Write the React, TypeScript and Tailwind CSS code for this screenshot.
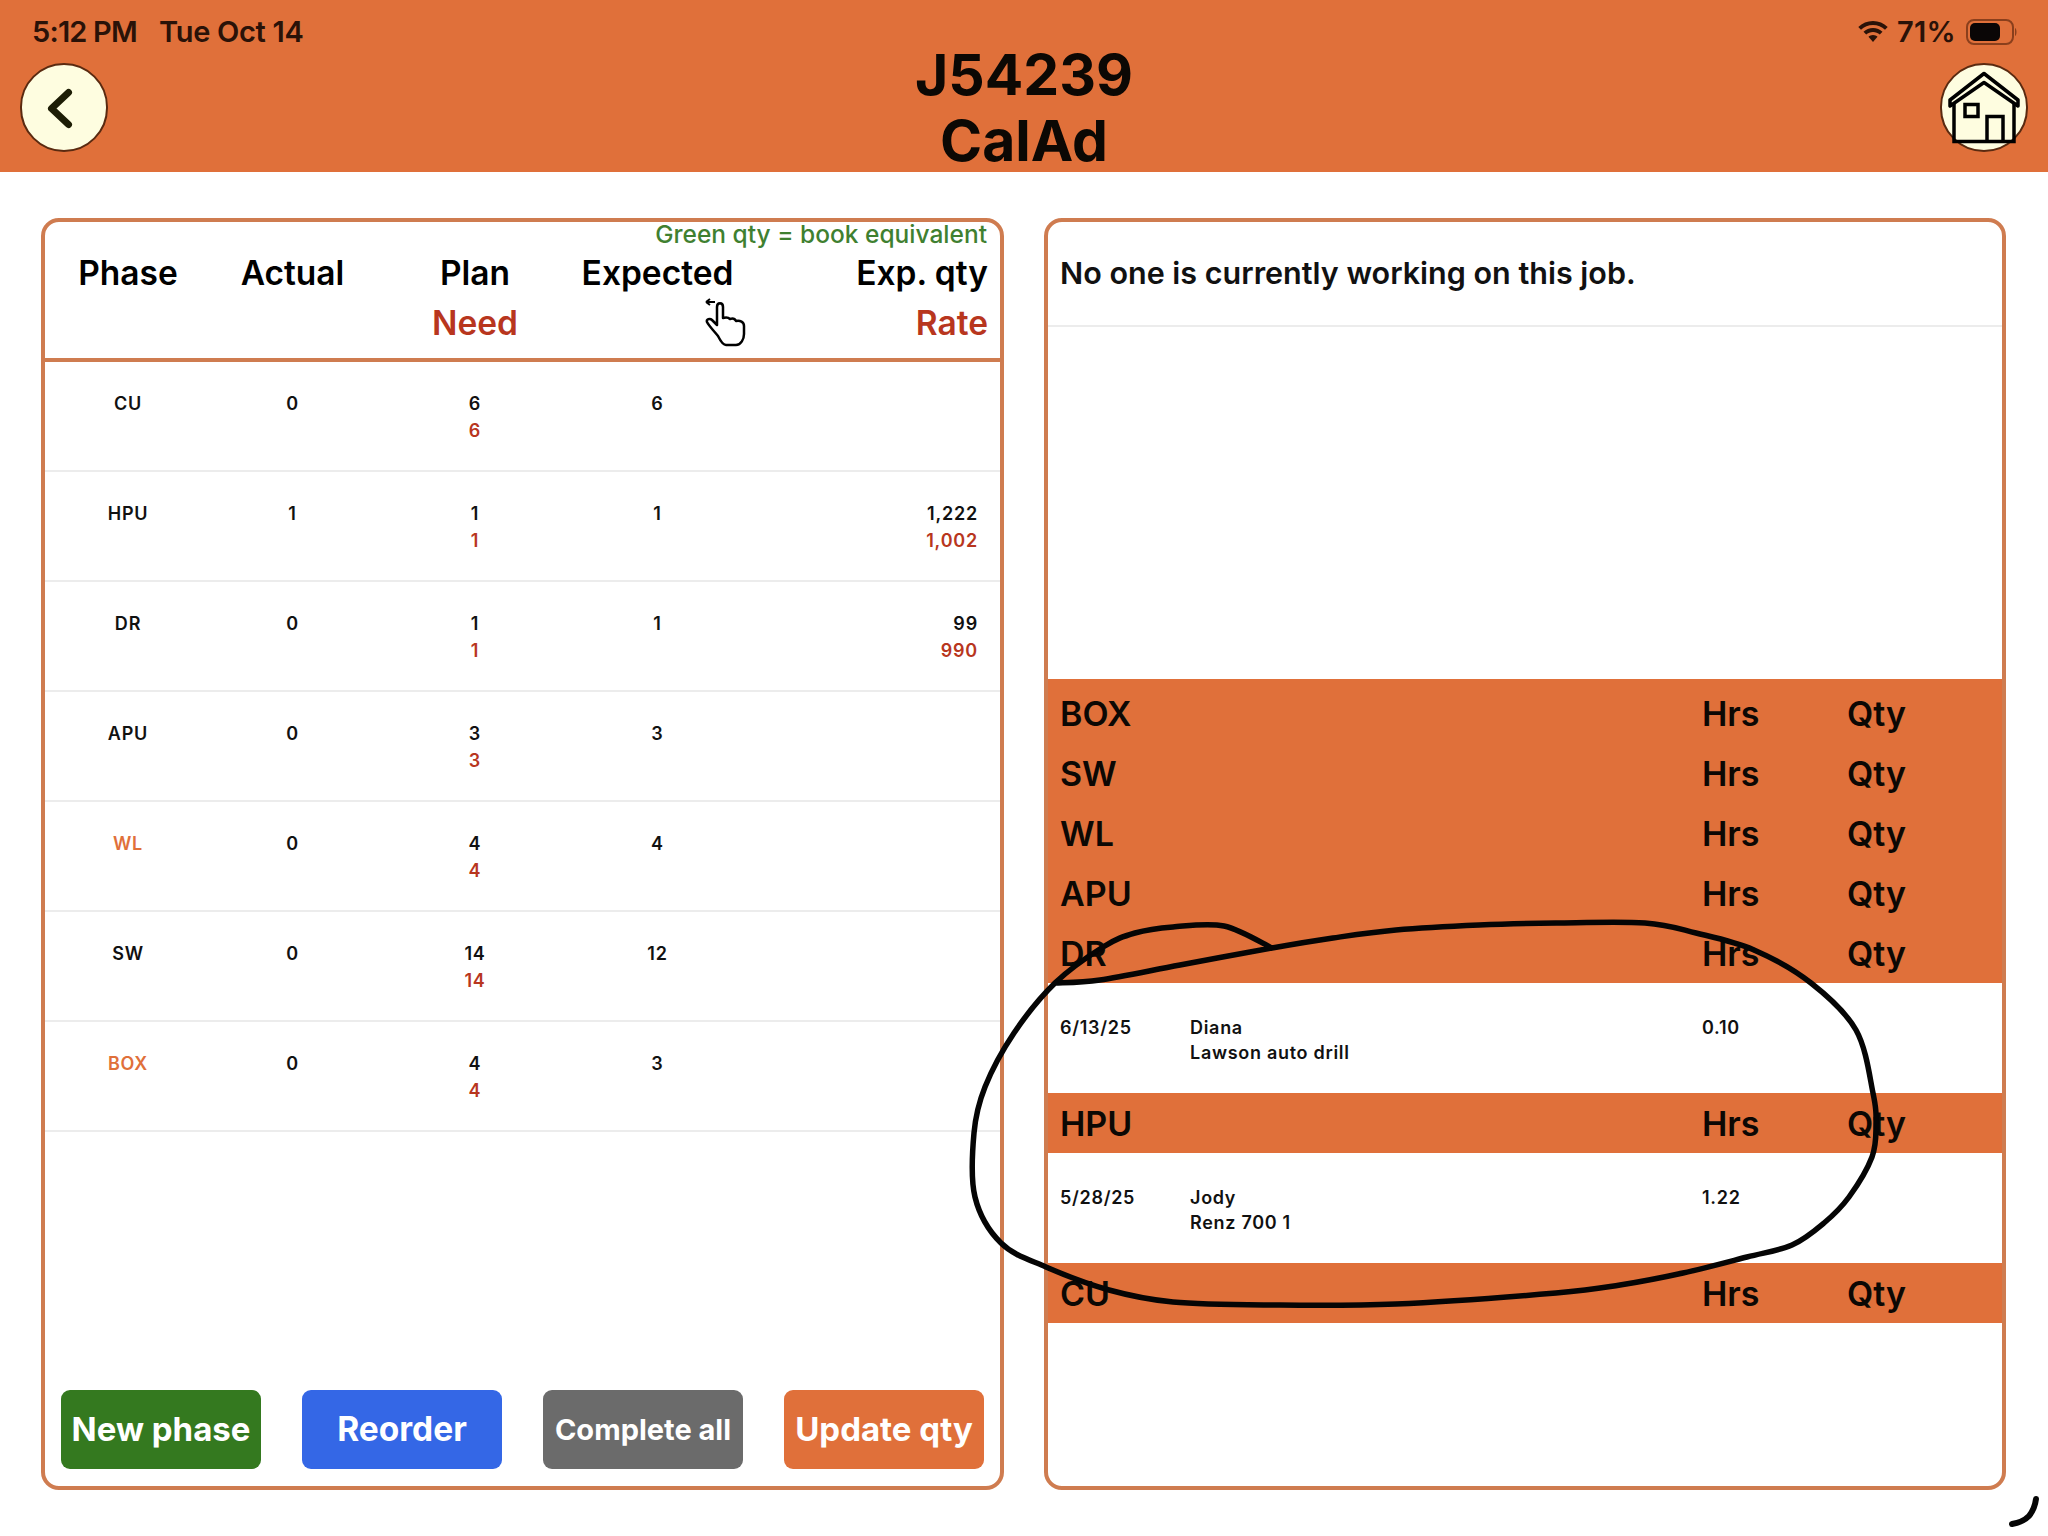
import React from "react";

const rows = [
  { p: "CU", a: "0", plan: "6", need: "6", e: "6" },
  { p: "HPU", a: "1", plan: "1", need: "1", e: "1", q: "1,222", r: "1,002" },
  { p: "DR", a: "0", plan: "1", need: "1", e: "1", q: "99", r: "990" },
  { p: "APU", a: "0", plan: "3", need: "3", e: "3" },
  { p: "WL", a: "0", plan: "4", need: "4", e: "4", o: true },
  { p: "SW", a: "0", plan: "14", need: "14", e: "12" },
  { p: "BOX", a: "0", plan: "4", need: "4", e: "3", o: true },
];

const loop: [number, number][] = [
  [1272, 948], [1224, 926], [1173, 927], [1135, 933], [1103, 947], [1055, 983], [1014, 1033], [985, 1087],
  [974, 1133], [975, 1197], [1001, 1243], [1046, 1267], [1109, 1290], [1173, 1302], [1269, 1305], [1396, 1304],
  [1556, 1293], [1620, 1285], [1683, 1273], [1747, 1257], [1792, 1245], [1824, 1223], [1849, 1197], [1872, 1157], [1876, 1125], [1873, 1093], [1856, 1030], [1811, 983],
  [1754, 950], [1696, 933], [1645, 923], [1556, 923], [1479, 925], [1396, 930], [1333, 938], [1272, 948],
  [1180, 965], [1100, 980], [1055, 983],
];

function smooth(p: [number, number][]) {
  let d = `M${p[0][0]} ${p[0][1]}`;
  for (let i = 0; i < p.length - 1; i++) {
    const a = p[Math.max(i - 1, 0)];
    const b = p[i];
    const c = p[i + 1];
    const e = p[Math.min(i + 2, p.length - 1)];
    d += `C${b[0] + (c[0] - a[0]) / 6} ${b[1] + (c[1] - a[1]) / 6} ${c[0] - (e[0] - b[0]) / 6} ${c[1] - (e[1] - b[1]) / 6} ${c[0]} ${c[1]}`;
  }
  return d;
}

function Band({ name }: { name: string }) {
  return (
    <div className="flex h-[60px] items-center bg-[#e0703a] text-[34px] font-semibold text-[#0c0804]">
      <div className="w-[654px] pl-[12px]">{name}</div>
      <div className="w-[145px]">Hrs</div>
      <div>Qty</div>
    </div>
  );
}

function Detail({ d, n, j, h }: { d: string; n: string; j: string; h: string }) {
  return (
    <div className="flex h-[110px] pt-[32px] text-[18px] leading-[25px] font-semibold tracking-[0.7px] text-[#111]">
      <div className="w-[142px] pl-[12px]">{d}</div>
      <div className="w-[512px]">
        <div>{n}</div>
        <div>{j}</div>
      </div>
      <div>{h}</div>
    </div>
  );
}

function Button({ label, cls, size }: { label: string; cls: string; size: string }) {
  return (
    <div className={`flex h-[79px] w-[200px] items-center justify-center rounded-[9px] font-bold whitespace-nowrap text-white ${cls} ${size}`}>
      {label}
    </div>
  );
}

function Circle({ children }: { children: React.ReactNode }) {
  return (
    <div className="mb-[3px] flex h-[89px] w-[88px] items-center justify-center rounded-full border-2 border-[#5a2a10] bg-[#fefde0]">
      {children}
    </div>
  );
}

export default function App() {
  return (
    <div className="relative h-[1536px] w-[2048px] overflow-hidden bg-white font-['Inter','Liberation_Sans',sans-serif]">
      <header className="h-[172px] bg-[#e0703a] text-[#0c0804]">
        <div className="flex h-[63px] items-center justify-between pt-[1px] pr-[30px] pl-[32px] text-[29px] font-semibold text-[#2a1208]">
          <div className="flex gap-[22px]">
            <span className="tracking-[-0.8px]">5:12 PM</span>
            <span className="tracking-[-0.3px]">Tue Oct 14</span>
          </div>
          <div className="flex items-center gap-[9px]">
            <svg width="30" height="22" viewBox="0 0 30 22" fill="#2a1208">
              <path d="M15 0C9.300 0 4.200 2.200 0.300 5.900L3 8.700C6.200 5.700 10.400 3.900 15 3.900S23.800 5.700 27 8.700L29.700 5.900C25.800 2.200 20.700 0 15 0Z" />
              <path d="M15 7C11.300 7 8 8.400 5.500 10.800L8.200 13.600C10 11.900 12.400 10.900 15 10.900S20 11.900 21.800 13.600L24.500 10.800C22 8.400 18.700 7 15 7Z" />
              <path d="M15 14C13.200 14 11.700 14.700 10.500 15.800L15 21L19.500 15.800C18.300 14.700 16.800 14 15 14Z" />
            </svg>
            <span className="tracking-[0.3px]">71%</span>
            <svg width="52" height="26" viewBox="0 0 52 26" className="ml-[1px]">
              <rect x="1" y="1" width="46" height="24" rx="7" fill="none" stroke="#8a3f1c" strokeWidth="2" />
              <rect x="4" y="4" width="30" height="18" rx="5" fill="#0a0606" />
              <path d="M49 9C51 10 51 16 49 17Z" fill="#8a3f1c" />
            </svg>
          </div>
        </div>
        <div className="mt-[-18px] flex h-[127px] items-center justify-between px-[20px]">
          <Circle>
            <svg width="40" height="48" viewBox="0 0 40 48" fill="none" stroke="#1d1d05" strokeWidth="7" strokeLinecap="round" strokeLinejoin="round">
              <path d="M24.500 9.500L7.500 25.500L24.500 41.500" />
            </svg>
          </Circle>
          <div className="mb-[1px] text-center text-[57px] leading-[66px] font-bold">
            <div>J54239</div>
            <div>CalAd</div>
          </div>
          <Circle>
            <svg width="84" height="84" viewBox="0 0 84 84" fill="none" stroke="#000" strokeWidth="3.500">
              <path d="M8 35L42 8.500L76 35V41L42 17.500L8 41Z" strokeLinejoin="round" />
              <path d="M12 38V76.500H72V38" />
              <rect x="23" y="39.500" width="13" height="12" />
              <path d="M45 76.500V51.500H61V76.500" />
            </svg>
          </Circle>
        </div>
      </header>

      <main className="flex gap-[40px] pt-[46px] pl-[41px]">
        <section className="flex h-[1272px] w-[963px] flex-col overflow-hidden rounded-[18px] border-4 border-[#cf7c50]">
          <div className="h-[140px] shrink-0 border-b-4 border-[#cf7c50]">
            <div className="pr-[13px] text-right text-[24.500px] leading-[24px] font-medium text-[#3f8030]">
              Green qty = book equivalent
            </div>
            <div className="mt-[2px] grid grid-cols-[166px_163px_202px_163px_1fr] text-center text-[33.500px] leading-[50px] font-semibold text-black">
              <div>Phase</div>
              <div>Actual</div>
              <div>
                <div>Plan</div>
                <div className="text-[#b8361e]">Need</div>
              </div>
              <div>Expected</div>
              <div className="pr-[12px] text-right">
                <div>Exp. qty</div>
                <div className="text-[#b8361e]">Rate</div>
              </div>
            </div>
          </div>
          {rows.map((r) => (
            <div
              key={r.p}
              className="grid h-[110px] shrink-0 grid-cols-[166px_163px_202px_163px_1fr] border-b-2 border-[#ececec] pt-[28px] text-center text-[18px] leading-[27px] font-semibold tracking-[0.8px] text-[#111]"
            >
              <div className={r.o ? "text-[#e0703a]" : ""}>{r.p}</div>
              <div>{r.a}</div>
              <div>
                <div>{r.plan}</div>
                <div className="text-[#b8361e]">{r.need}</div>
              </div>
              <div>{r.e}</div>
              <div className="pr-[22px] text-right">
                <div>{r.q}</div>
                <div className="text-[#b8361e]">{r.r}</div>
              </div>
            </div>
          ))}
          <div className="mt-auto flex justify-between px-[16px] pb-[17px]">
            <Button label="New phase" cls="bg-[#34791f]" size="text-[33px]" />
            <Button label="Reorder" cls="bg-[#3467e6]" size="text-[33.500px]" />
            <Button label="Complete all" cls="bg-[#6b6b6b]" size="text-[29px]" />
            <Button label="Update qty" cls="bg-[#e0703a]" size="text-[33px]" />
          </div>
        </section>

        <section className="flex h-[1272px] w-[962px] flex-col overflow-hidden rounded-[18px] border-4 border-[#cf7c50]">
          <div className="flex h-[105px] shrink-0 items-end border-b-2 border-[#ececec] pb-[34px] pl-[12px] text-[30.500px] leading-[36px] font-semibold text-[#111]">
            No one is currently working on this job.
          </div>
          <div className="h-[352px] shrink-0" />
          <div className="bg-[#e0703a] pt-[4px]">
            <Band name="BOX" />
          </div>
          <Band name="SW" />
          <Band name="WL" />
          <Band name="APU" />
          <Band name="DR" />
          <Detail d="6/13/25" n="Diana" j="Lawson auto drill" h="0.10" />
          <Band name="HPU" />
          <Detail d="5/28/25" n="Jody" j="Renz 700 1" h="1.22" />
          <Band name="CU" />
        </section>
      </main>

      {/* cursor glyph */}
      <svg className="absolute top-[298px] left-[704px]" width="44" height="50" viewBox="0 0 44 50" fill="#fff" stroke="#000" strokeWidth="2.500" strokeLinejoin="round">
        <path d="M14 38C10 33 5 28 3 24C2 21 6 20 8 22L13 27V9C13 4 19 4 19 9V20C22 19 24 19 26 21C29 20 31 21 32 23C36 22 40 24 40 28V36C40 41 37 47 32 47H22C19 47 16 42 14 38Z" />
        <path d="M2 4H11M2 4L6 1M2 4L6 7" fill="none" strokeWidth="2" />
      </svg>

      {/* hand-drawn markup over the screenshot */}
      <svg className="pointer-events-none absolute top-0 left-0" width="2048" height="1536" viewBox="0 0 2048 1536" fill="none" stroke="#050505" strokeWidth="5.500" strokeLinecap="round" strokeLinejoin="round">
        <path d={smooth(loop)} />
        <path d="M2036 1499C2035 1507 2033 1511 2029 1516C2024 1521 2018 1523 2012 1524" strokeWidth="6" />
      </svg>
    </div>
  );
}
